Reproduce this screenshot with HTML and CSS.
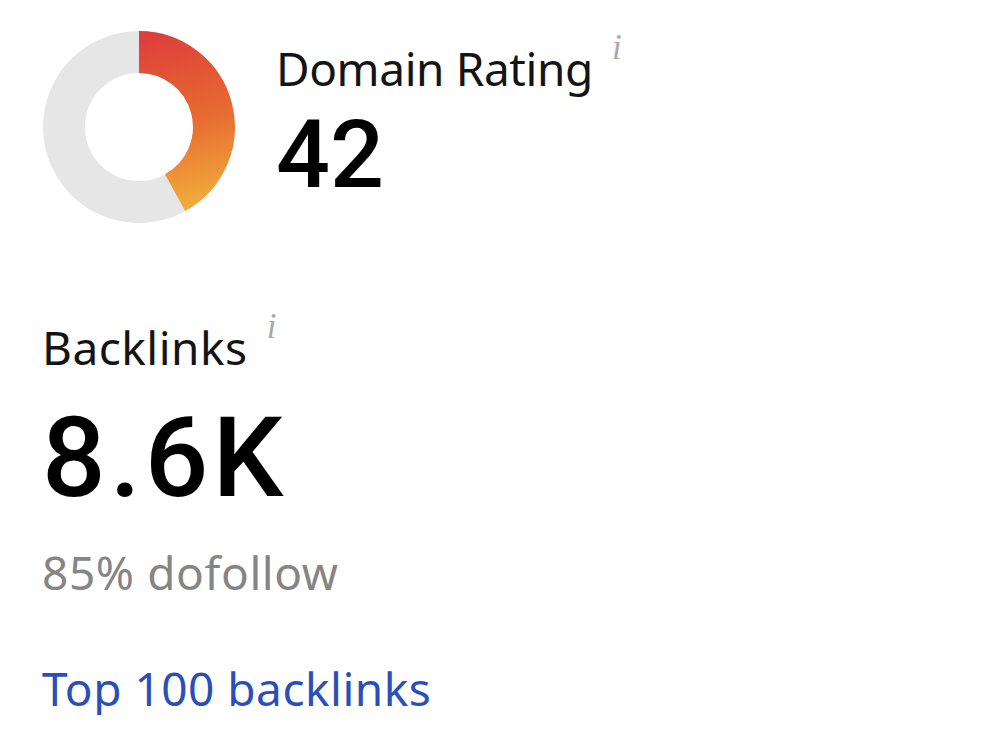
FILE: index.html
```html
<!DOCTYPE html>
<html lang="en">
<head>
<meta charset="utf-8">
<title>Domain overview</title>
<link rel="stylesheet" href="styles.css">
</head>
<body>
<main class="panel">
  <section class="dr">
    <svg class="donut" width="194" height="194" viewBox="0 0 194 194" aria-hidden="true">
      <defs>
        <linearGradient id="drGrad" gradientUnits="userSpaceOnUse" x1="110" y1="5" x2="150" y2="185">
          <stop offset="0" stop-color="#de3f3a"/>
          <stop offset="0.5" stop-color="#e76c30"/>
          <stop offset="1" stop-color="#f3b33c"/>
        </linearGradient>
      </defs>
      <!-- track -->
      <circle cx="97" cy="97" r="75" fill="none" stroke="#e6e6e6" stroke-width="42"/>
      <!-- 42% arc, clockwise from 12 o'clock -->
      <path d="M97 22 A75 75 0 0 1 133.1 162.7" fill="none" stroke="url(#drGrad)" stroke-width="42"/>
    </svg>
    <div class="dr-text">
      <div class="label label-dr">Domain Rating<span class="info">i</span></div>
      <div class="value value-dr">42</div>
    </div>
  </section>

  <section class="backlinks">
    <div class="label">Backlinks<span class="info">i</span></div>
    <div class="value value-bl">8.6K</div>
    <div class="sub">85% dofollow</div>
    <a class="link" href="#">Top 100 backlinks</a>
  </section>
</main>
</body>
</html>
```

FILE: styles.css
```css
html, body {
  margin: 0;
  padding: 0;
  background: #ffffff;
}

.panel {
  padding: 30px 0 0 42px;
  font-family: "Noto Sans", "Open Sans", sans-serif;
  color: #111111;
}

.dr {
  display: flex;
  align-items: flex-start;
}

.donut {
  display: block;
  flex: none;
}

.dr-text {
  margin-left: 40px;
  padding-top: 11px;
}

.label {
  display: flex;
  align-items: flex-start;
  font-size: 46px;
  line-height: 54px;
  letter-spacing: 0.5px;
  color: #141414;
}

.label-dr {
  letter-spacing: -0.4px;
}

.info {
  font-family: "Liberation Serif", "DejaVu Serif", serif;
  font-style: italic;
  font-size: 35px;
  line-height: 35px;
  letter-spacing: 0;
  color: #a9a9a9;
  margin-left: 19px;
  margin-top: -11px;
}

.value {
  font-family: Roboto, "Liberation Sans", Arial, sans-serif;
  font-weight: 500;
  line-height: 1;
  color: #000000;
}

.value-dr {
  font-size: 95px;
  margin-top: 12px;
}

.backlinks {
  margin-top: 96px;
  display: flex;
  flex-direction: column;
  align-items: flex-start;
}

.value-bl {
  font-size: 112px;
  letter-spacing: 4px;
  margin-top: 28px;
}

.sub {
  margin-top: 31px;
  font-size: 46px;
  line-height: 54px;
  letter-spacing: 0.6px;
  color: #858585;
}

.link {
  margin-top: 62px;
  font-size: 46px;
  line-height: 54px;
  letter-spacing: 0.5px;
  color: #2b4fb9;
  text-decoration: none;
}
```
